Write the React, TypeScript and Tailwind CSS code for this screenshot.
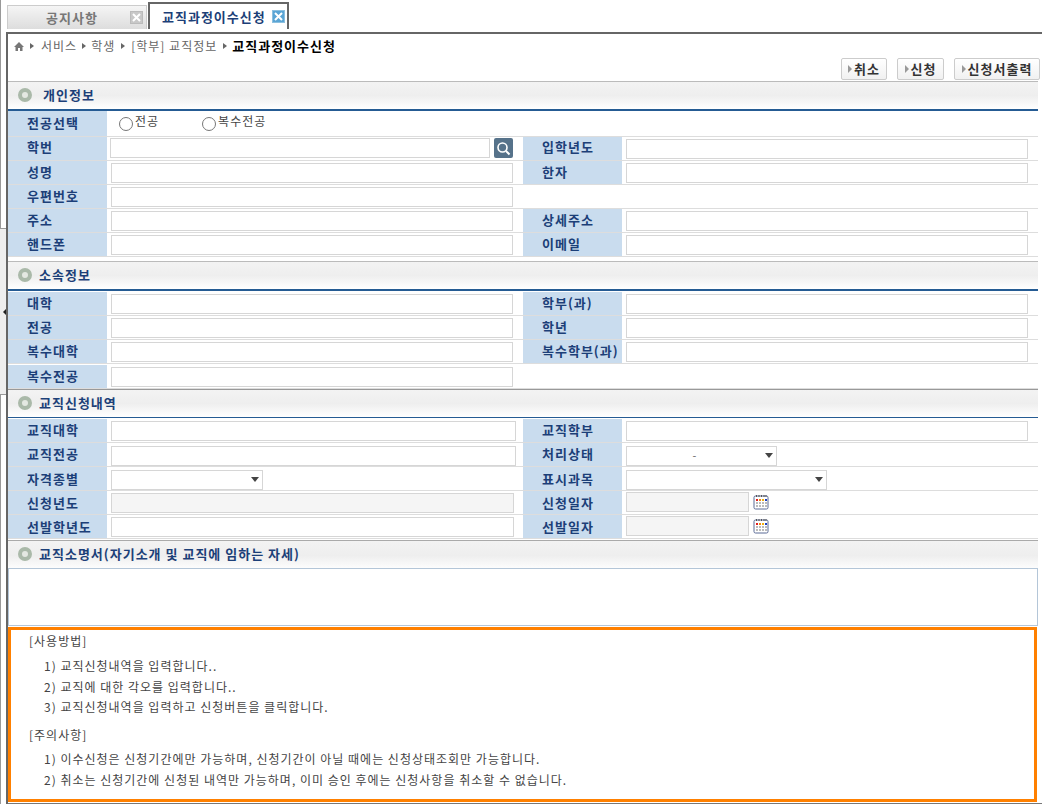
import type { ReactNode } from "react";

const FONT = "font-['Noto_Sans_CJK_KR','Liberation_Sans',sans-serif]";

function SectionHead({
  title,
  bar,
  indent = "pl-0",
  top = "border-[#bbbbbb]",
  pad = "pb-[2px]",
}: {
  title: string;
  bar?: ReactNode;
  indent?: string;
  top?: string;
  pad?: string;
}) {
  return (
    <div className={`flex h-[30px] w-[1030px] flex-col border-t ${top}`}>
      <div className={`flex flex-1 items-center gap-[7px] bg-gradient-to-b from-[#f3f3f3] via-[#eeeeee] to-white pl-[10px] ${pad}`}>
        <span className="h-[14px] w-[14px] rounded-full border-[4px] border-[#aab9a9] bg-[#e4e8e2]" />
        <span className={`text-[13px] font-bold leading-none tracking-[1px] text-[#1c3f78] ${indent}`}>{title}</span>
      </div>
      {bar}
    </div>
  );
}

function Label({ children, pad = "pb-[2px]" }: { children?: ReactNode; pad?: string }) {
  return (
    <div className={`flex h-full w-[99px] shrink-0 items-center bg-[#c9dcee] pl-[19px] text-[13px] font-bold tracking-[1px] text-[#1c3f78] ${pad}`}>
      {children}
    </div>
  );
}

function Field({ className = "w-[402px]", disabled = false }: { className?: string; disabled?: boolean }) {
  return (
    <input
      type="text"
      readOnly
      className={`h-[20px] border border-[#d6d6d6] outline-none ${disabled ? "bg-[#f5f5f5]" : "bg-white"} ${className}`}
    />
  );
}

function Select({ className, value }: { className: string; value?: string }) {
  return (
    <div className={`relative flex h-[20px] items-center justify-center border border-[#d6d6d6] bg-white pr-[14px] text-[11px] text-[#666666] ${className}`}>
      {value}
      <span className="absolute right-[3px] top-[6px] h-0 w-0 border-x-[4px] border-t-[5px] border-x-transparent border-t-[#444444]" />
    </div>
  );
}

function Calendar() {
  return (
    <svg width="16" height="16" viewBox="0 0 16 16" className="ml-[4px] shrink-0">
      <rect x="1" y="2" width="14" height="13" rx="1.5" fill="#ffffff" stroke="#5b6b96" />
      <path d="M3.5 1v2M6 1v2M8.5 1v2M11 1v2M13 1v2" stroke="#555555" />
      <rect x="3" y="5" width="2" height="2" fill="#e02020" />
      <rect x="6" y="5" width="2" height="2" fill="#f08a10" />
      <rect x="9" y="5" width="2" height="2" fill="#f0b010" />
      <rect x="12" y="5" width="2" height="2" fill="#2040c0" />
      <path d="M3 9h2M6 9h2M9 9h2M12 9h2M3 12h2M6 12h2M9 12h2M12 12h2" stroke="#bbbbbb" strokeWidth="2" />
    </svg>
  );
}

function DateField() {
  return (
    <div className="mb-[2px] flex items-center">
      <Field className="h-[16px] w-[123px]" disabled />
      <Calendar />
    </div>
  );
}

function Row({
  left,
  right,
  leftField,
  rightField,
  labelPad,
  fieldPad = "",
}: {
  left: string;
  right?: string;
  leftField?: ReactNode;
  rightField?: ReactNode;
  labelPad?: string;
  fieldPad?: string;
}) {
  return (
    <div className="flex h-[24px] w-[1030px] border-b border-[#dddddd]">
      <div className="flex h-full w-[515px] shrink-0 items-center">
        <Label pad={labelPad}>{left}</Label>
        <div className={`ml-[4px] flex items-center ${fieldPad}`}>{leftField ?? <Field />}</div>
      </div>
      {right && (
        <div className="flex h-full items-center">
          <Label pad={labelPad}>{right}</Label>
          <div className={`ml-[4px] flex items-center ${fieldPad}`}>{rightField ?? <Field />}</div>
        </div>
      )}
    </div>
  );
}

function Crumb({ gap = "mx-[6px]" }: { gap?: string }) {
  return <span className={`h-0 w-0 border-y-[3px] border-l-[4px] border-y-transparent border-l-[#666666] ${gap}`} />;
}

function ActionButton({ label, className }: { label: string; className: string }) {
  return (
    <button
      type="button"
      className={`flex h-[22px] items-center justify-center gap-[2px] rounded-[2px] border border-[#cccccc] bg-gradient-to-b from-white to-[#f1f1f1] text-[13px] font-bold tracking-[1px] text-[#333333] ${className}`}
    >
      <span className="h-0 w-0 border-y-[4px] border-l-[4px] border-y-transparent border-l-[#999999]" />
      {label}
    </button>
  );
}

function CloseIcon({ bg, border }: { bg: string; border: string }) {
  return (
    <span className={`flex h-[13px] w-[13px] items-center justify-center border ${bg} ${border}`}>
      <svg width="9" height="9" viewBox="0 0 9 9">
        <path d="M1 1l7 7M8 1L1 8" stroke="#ffffff" strokeWidth="2" />
      </svg>
    </span>
  );
}

export default function App() {
  return (
    <div className={`flex h-[804px] w-[1042px] overflow-hidden bg-white ${FONT}`}>
      {/* 왼쪽 프레임 조각 */}
      <div className="flex w-[6px] shrink-0 flex-col">
        <div className="h-[229px] border-b border-l border-[#999999] bg-white" />
        <div className="flex h-[165px] items-center justify-end bg-[#eeeeee]">
          <span className="h-0 w-0 border-y-[3px] border-r-[3px] border-y-transparent border-r-[#222222]" />
        </div>
        <div className="flex-1 border-t border-l border-[#999999] bg-white" />
      </div>

      <div className="flex min-w-0 flex-1 flex-col">
        {/* 탭 */}
        <div className="flex h-[32px] shrink-0 items-start pt-[2px]">
          <div className="ml-[1px] mt-[3px] flex h-[24px] w-[140px] items-center border border-b-0 border-[#cccccc] bg-gradient-to-b from-[#f5f5f5] to-[#dddddd] pl-[38px] pr-[3px]">
            <span className="text-[13px] font-bold tracking-[1px] text-[#777777]">공지사항</span>
            <span className="ml-auto">
              <CloseIcon bg="bg-[#c8c8c8]" border="border-[#bbbbbb]" />
            </span>
          </div>
          <div className="ml-[1px] flex h-[27px] w-[141px] items-center border-2 border-b-0 border-[#666666] bg-white pl-[12px]">
            <span className="text-[13px] font-bold tracking-[1px] text-[#1c3f78]">교직과정이수신청</span>
            <span className="ml-auto mr-[2px]">
              <CloseIcon bg="bg-[#5aa5d5]" border="border-[#8cc0e0]" />
            </span>
          </div>
        </div>

        {/* 본문 */}
        <div className="flex flex-1 flex-col border-l-2 border-t-2 border-[#666666]">
          <div className="flex h-[47px] shrink-0 flex-col">
            <div className="flex h-[24px] items-center pl-[6px] text-[12px] tracking-[1px] text-[#666666]">
              <svg width="10" height="11" viewBox="0 0 10 11">
                <path d="M5 1L0 6h1.5v4H4V7h2v3h2.5V6H10z" fill="#777777" />
              </svg>
              <Crumb gap="ml-[6px] mr-[7px]" />
              <span>서비스</span>
              <Crumb gap="mx-[5px]" />
              <span>학생</span>
              <Crumb />
              <span>[학부] 교직정보</span>
              <Crumb gap="ml-[6px] mr-[5px]" />
              <span className="text-[13px] font-bold text-black">교직과정이수신청</span>
            </div>
            <div className="flex h-[22px] items-center">
              <ActionButton label="취소" className="ml-[833px] w-[46px]" />
              <ActionButton label="신청" className="ml-[10px] w-[47px]" />
              <ActionButton label="신청서출력" className="ml-[10px] w-[86px]" />
            </div>
          </div>

          {/* 개인정보 */}
          <SectionHead title="개인정보" bar={<div className="h-[2px] bg-[#255b93]" />} indent="pl-[4px]" />
          <div className="flex h-[26px] w-[1030px] border-b border-[#dddddd]">
            <Label>전공선택</Label>
            <div className="flex items-center pl-[12px] text-[12px] tracking-[1px] text-[#444444]">
              <span className="h-[14px] w-[14px] rounded-full border border-[#777777] bg-white" />
              <span className="mb-[6px] ml-[2px]">전공</span>
              <span className="ml-[43px] h-[14px] w-[14px] rounded-full border border-[#777777] bg-white" />
              <span className="mb-[6px] ml-[2px]">복수전공</span>
            </div>
          </div>
          <Row
            left="학번"
            right="입학년도"
            labelPad="pb-[3px]"
            leftField={
              <div className="-ml-[1px] mb-[1px] flex items-center">
                <Field className="w-[380px]" />
                <span className="ml-[4px] flex h-[20px] w-[19px] items-center justify-center rounded-[2px] bg-[#56728a]">
                  <svg width="15" height="15" viewBox="0 0 15 15" fill="none" stroke="#ffffff">
                    <circle cx="6.5" cy="6.5" r="4.5" strokeWidth="1.6" />
                    <path d="M10 10l3.5 3.5" strokeWidth="2" />
                  </svg>
                </span>
              </div>
            }
          />
          <Row left="성명" right="한자" />
          <Row left="우편번호" />
          <Row left="주소" right="상세주소" />
          <Row left="핸드폰" right="이메일" />

          {/* 소속정보 */}
          <div className="mb-[1px] mt-[4px]">
            <SectionHead title="소속정보" bar={<div className="h-[2px] bg-[#255b93]" />} />
          </div>
          <Row left="대학" right="학부(과)" />
          <Row left="전공" right="학년" />
          <Row left="복수대학" right="복수학부(과)" />
          <div className="pt-[1px]">
            <Row left="복수전공" />
          </div>

          {/* 교직신청내역 */}
          <SectionHead title="교직신청내역" bar={<div className="mb-[1px] h-[1px] bg-[#255b93]" />} top="border-[#999999]" />
          <Row left="교직대학" right="교직학부" leftField={<Field className="w-[405px]" />} />
          <Row
            left="교직전공"
            right="처리상태"
            fieldPad="pt-[2px]"
            leftField={<Field className="w-[405px]" />}
            rightField={<Select className="w-[151px]" value="-" />}
          />
          <Row
            left="자격종별"
            right="표시과목"
            labelPad="pb-0"
            fieldPad="pt-[2px]"
            leftField={<Select className="w-[152px]" />}
            rightField={<Select className="w-[201px]" />}
          />
          <Row
            left="신청년도"
            right="신청일자"
            labelPad="pb-0"
            leftField={<Field className="mt-[1px] w-[403px]" disabled />}
            rightField={<DateField />}
          />
          <Row
            left="선발학년도"
            right="선발일자"
            labelPad="pb-0"
            leftField={<Field className="w-[403px]" />}
            rightField={<DateField />}
          />

          {/* 교직소명서 */}
          <div className="mt-[1px]">
            <SectionHead title="교직소명서(자기소개 및 교직에 임하는 자세)" top="border-[#aaaaaa]" pad="pb-[4px]" />
          </div>
          <div className="-mt-[2px] h-[58px] w-[1030px] border border-[#b4c6d8] bg-white" />

          {/* 사용방법 */}
          <div className="mt-[1px] h-[175px] w-[1029px] border-[3px] border-[#ff8000] pl-[18px] text-[12px] leading-none tracking-[1px] text-[#444444]">
            <p className="mt-[5px]">[사용방법]</p>
            <div className="ml-[15px] mt-[13px] flex flex-col gap-[8.5px]">
              <p>1) 교직신청내역을 입력합니다..</p>
              <p>2) 교직에 대한 각오를 입력합니다..</p>
              <p>3) 교직신청내역을 입력하고 신청버튼을 클릭합니다.</p>
            </div>
            <p className="mt-[16px]">[주의사항]</p>
            <div className="ml-[15px] mt-[12px] flex flex-col gap-[9px]">
              <p>1) 이수신청은 신청기간에만 가능하며, 신청기간이 아닐 때에는 신청상태조회만 가능합니다.</p>
              <p>2) 취소는 신청기간에 신청된 내역만 가능하며, 이미 승인 후에는 신청사항을 취소할 수 없습니다.</p>
            </div>
          </div>
          <div className="mt-[1px] h-[2px] w-full bg-[#777777]" />
        </div>
      </div>
    </div>
  );
}
